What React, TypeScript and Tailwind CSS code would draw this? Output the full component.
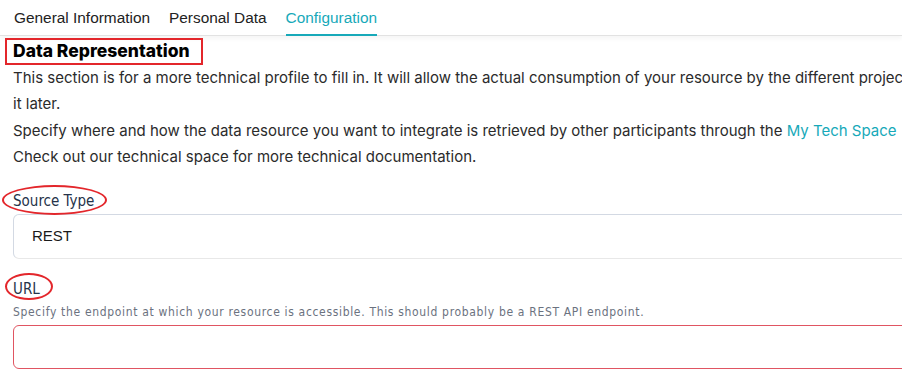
export default function App() {
  return (
    <div className="w-[908px] h-[372px] bg-white overflow-hidden">
      <div className="w-[902px] overflow-hidden">
        {/* tabs */}
        <div className="flex gap-[19px] pl-[14px] border-b border-[#e2e2e2] shadow-[0_3px_4px_rgba(0,0,0,0.04)] font-['Liberation_Sans',sans-serif] text-[15.4px] text-[#222]">
          <div className="pt-[8px] pb-[8px] leading-[19px]">General Information</div>
          <div className="pt-[8px] pb-[8px] leading-[19px]">Personal Data</div>
          <div className="pt-[8px] pb-[6px] leading-[19px] text-[#17a9b9] border-b-2 border-[#17a9b9] -mb-px">
            Configuration
          </div>
        </div>

        <div className="w-[930px] pl-[13px] font-['Inter',sans-serif]">
          {/* title */}
          <div className="mt-[2px] -ml-[8px] w-[198px] h-[27px] border-2 border-[#e3262b] flex items-center pl-[6px]">
            <span className="font-extrabold text-[17.5px] text-black whitespace-nowrap">Data Representation</span>
          </div>

          {/* description */}
          <div className="text-[15px] leading-[26.4px] text-[#2b2b2b] whitespace-nowrap">
            <div>
              This section is for a more technical profile to fill in. It will allow the actual consumption of your
              resource by the different projects
            </div>
            <div>it later.</div>
            <div>
              Specify where and how the data resource you want to integrate is retrieved by other participants through
              the <span className="text-[#17a9b9]">My Tech Space</span>
            </div>
            <div>Check out our technical space for more technical documentation.</div>
          </div>

          {/* source type */}
          <div className="mt-[19px] relative h-[20px] leading-[20px]">
            <span className="font-['DejaVu_Sans_Condensed',sans-serif] text-[15px] text-[#26334a]">Source Type</span>
            <div className="absolute left-[-11px] top-[-5px] w-[105px] h-[30px] rounded-[50%] border-2 border-[#e3262b]" />
          </div>
          <div className="mt-[4px] h-[45px] rounded-[6px] border border-[#d3d9e3] border-b-[#e8e8e8] flex items-center pl-[18px] font-['Liberation_Sans',sans-serif] text-[15px] text-[#1a1a1a]">
            REST
          </div>

          {/* url */}
          <div className="mt-[19px] relative h-[20px] leading-[20px]">
            <span className="font-['DejaVu_Sans_Condensed',sans-serif] text-[15px] text-[#26334a]">URL</span>
            <div className="absolute left-[-8px] top-[-5px] w-[48px] h-[27px] rounded-[50%] border-2 border-[#e3262b]" />
          </div>
          <div className="mt-[6px] h-[16px] leading-[16px] font-['DejaVu_Sans_Condensed',sans-serif] text-[12px] tracking-[0.67px] text-[#6b7280] whitespace-nowrap">
            Specify the endpoint at which your resource is accessible. This should probably be a REST API endpoint.
          </div>
          <div className="mt-[5px] h-[44px] rounded-[6px] border border-[#e05562]" />
        </div>
      </div>
    </div>
  );
}
